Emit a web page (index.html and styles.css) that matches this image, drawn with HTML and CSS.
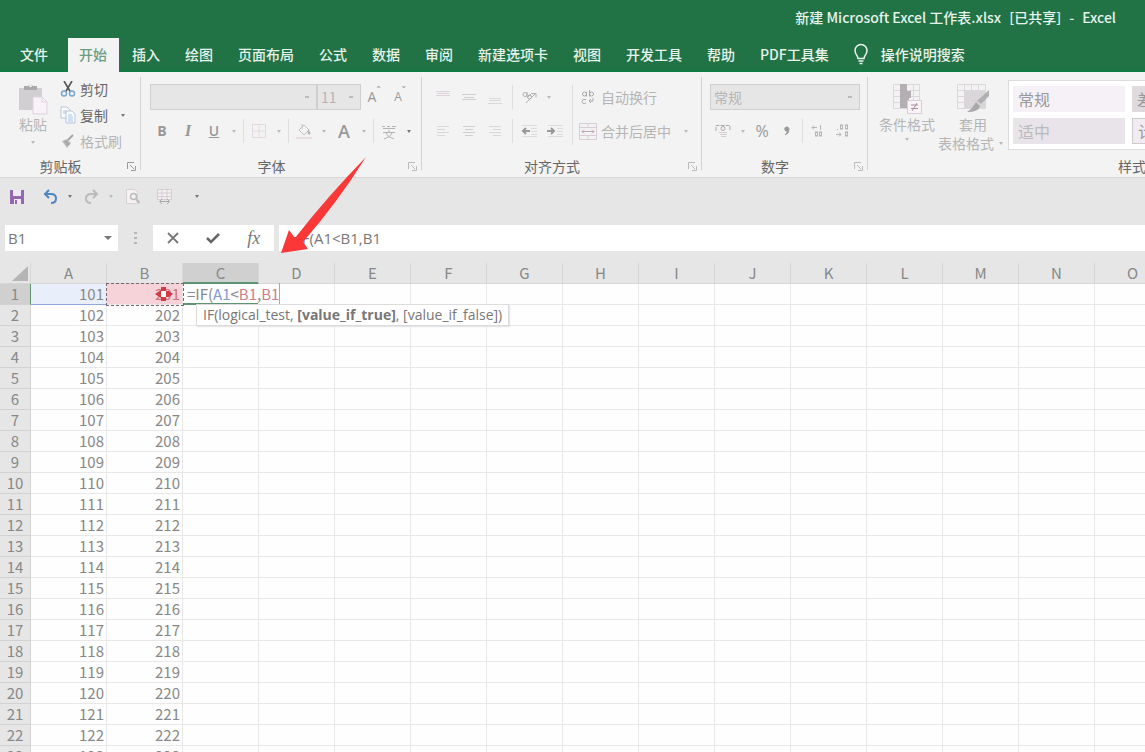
FILE: index.html
```html
<!DOCTYPE html>
<html lang="zh-CN">
<head>
<meta charset="utf-8">
<title>新建 Microsoft Excel 工作表.xlsx</title>
<link rel="stylesheet" href="styles.css">
</head>
<body>
<div class="app">
  <header class="top">
    <div class="title"><span>新建 Microsoft Excel 工作表.xlsx</span><span>[已共享]</span><span>-</span><span>Excel</span></div>
    <nav class="tabs">
      <button class="tab file">文件</button>
      <button class="tab active">开始</button>
      <button class="tab">插入</button>
      <button class="tab">绘图</button>
      <button class="tab">页面布局</button>
      <button class="tab">公式</button>
      <button class="tab">数据</button>
      <button class="tab">审阅</button>
      <button class="tab">新建选项卡</button>
      <button class="tab">视图</button>
      <button class="tab">开发工具</button>
      <button class="tab">帮助</button>
      <button class="tab">PDF工具集</button>
      <button class="tab tell"><svg width="16" height="22" viewBox="0 0 16 22" fill="none" stroke="#e8f3ec" stroke-width="1.5"><path d="M5 15.500C5 12.500 2 11.500 2 7.500a6 6 0 0 1 12 0c0 4-3 5-3 8z"/><path d="M5.500 18h5M6.500 20.500h3"/></svg>操作说明搜索</button>
    </nav>
  </header>

  <section class="ribbon">
    <div class="group clipboard">
      <div class="body">
        <button class="big paste dim">
          <svg width="30" height="32" viewBox="0 0 30 32"><path d="M1 5h23v22H1z" fill="#d2cfd3"/><path d="M6 7V3h4a3 3 0 0 1 5 0h4v4z" fill="#aaa"/><circle cx="12.500" cy="3" r="1.300" fill="#f3f3f3"/><path d="M15 14h9l5 5v12H15z" fill="#faf2f9" stroke="#ddd3dd"/><path d="M24 14v5h5" fill="none" stroke="#ddd3dd"/></svg>
          <span>粘贴</span><i class="caret"></i>
        </button>
        <div class="stack">
          <button class="line"><svg width="16" height="16" viewBox="0 0 16 16" fill="none"><path d="M4 0l6.500 11M12 0L5.500 11" stroke="#555" stroke-width="1.600"/><circle cx="4" cy="12.500" r="2.500" stroke="#7fa6cf" stroke-width="1.500"/><circle cx="12" cy="12.500" r="2.500" stroke="#7fa6cf" stroke-width="1.500"/></svg>剪切</button>
          <button class="line"><svg width="16" height="18" viewBox="0 0 16 18"><path d="M1 1h6l3 3v8H1z" fill="#f8fafc" stroke="#b9c5d3"/><path d="M6 5h6l3 3v9H6z" fill="#f8fafc" stroke="#b9c5d3"/><path d="M3 5h3M3 7h3M8 9h4M8 11h5M8 13h5M8 15h5" stroke="#a5c7e7"/></svg>复制<i class="caret dark"></i></button>
          <button class="line dim"><svg width="16" height="16" viewBox="0 0 16 16"><path d="M2 8l5-2 4 4-4 5z" fill="#b9b9b9"/><path d="M8 7l5-5M5 8l4 4" stroke="#a5a5a5" stroke-width="2"/></svg>格式刷</button>
        </div>
      </div>
      <div class="label"><span>剪贴板</span><button class="launch strong" aria-label="剪贴板选项"><svg width="9" height="9" viewBox="0 0 9 9"><path d="M.5 7V.5H7M3 3l4 4M8.500 4v4.500H4" fill="none" stroke="currentColor"/></svg></button></div>
    </div>

    <div class="group font">
      <div class="body rows">
        <div class="row">
          <select class="select face" aria-label="字体"><option></option></select><select class="select size" aria-label="字号"><option>11</option></select>
          <button class="tool grow" aria-label="增大字号">A<sup>ˆ</sup></button><button class="tool grow small" aria-label="减小字号">A<sup>ˇ</sup></button>
        </div>
        <div class="row">
          <button class="tool bold">B</button><button class="tool ital">I</button><button class="tool under">U</button><i class="caret"></i><i class="sep"></i>
          <button class="tool" aria-label="边框"><svg width="16" height="16" viewBox="0 0 16 16" fill="none" stroke="#e6d8e2"><path d="M1.500 1.500h13v13h-13zM8 1v14M1 8h14"/></svg></button><i class="caret"></i><i class="sep"></i>
          <button class="tool" aria-label="填充颜色"><svg width="16" height="17" viewBox="0 0 16 17"><path d="M3 7l5-5 5 5-5 5zM6 1v5" fill="none" stroke="#c6bec5"/><path d="M12 6q4 5 1.500 5.500T12 6" fill="#b5b0b5"/><path d="M0 14h16v2H0z" fill="#e5dce4"/></svg></button><i class="caret"></i>
          <button class="tool color">A</button><i class="caret"></i><i class="sep"></i>
          <button class="tool wen" aria-label="拼音指南"><svg width="14" height="17" viewBox="0 0 14 17" fill="none" stroke="#b4b4b4"><path d="M0 3.500h3M5 3.500h3M10 3.500h4M1 5.500h12M1 9.500h12M7 7v2M4 10q1 4 8 6M10 10q-1 4-8 6"/></svg></button><i class="caret dark"></i>
        </div>
      </div>
      <div class="label"><span>字体</span><button class="launch" aria-label="字体选项"><svg width="9" height="9" viewBox="0 0 9 9"><path d="M.5 7V.5H7M3 3l4 4M8.500 4v4.500H4" fill="none" stroke="currentColor"/></svg></button></div>
    </div>

    <div class="group align">
      <div class="body">
        <div class="rows">
          <div class="row">
            <button class="tool" aria-label="顶端对齐"><svg width="14" height="14" viewBox="0 0 14 14"><path d="M0 1.500h14M1 3.500h12M0 5.500h14" stroke="#dfd2da"/></svg></button><button class="tool" aria-label="垂直居中"><svg width="14" height="14" viewBox="0 0 14 14"><path d="M0 4.500h14M2 7.500h10M0 9.500h14" stroke="#d0d0d0"/></svg></button><button class="tool" aria-label="底端对齐"><svg width="14" height="14" viewBox="0 0 14 14"><path d="M1 8.500h12M1 10.500h12M0 13.500h14" stroke="#dcd7db"/></svg></button><i class="sep"></i>
            <button class="tool" aria-label="方向"><svg width="17" height="16" viewBox="0 0 17 16" fill="none" stroke="#b0b0b0"><path d="M5 14l9-9M11 4.500h4v4"/><circle cx="4" cy="5.500" r="2"/><path d="M6 3v5M7 8l4-4"/><circle cx="8.500" cy="8" r="2"/></svg></button><i class="caret"></i>
          </div>
          <div class="row">
            <button class="tool" aria-label="左对齐"><svg width="12" height="14" viewBox="0 0 12 14"><path d="M0 2.500h12M0 5.500h8M0 8.500h12M0 11.500h8" stroke="#d8d8d8"/></svg></button><button class="tool" aria-label="居中"><svg width="12" height="14" viewBox="0 0 12 14"><path d="M0 2.500h12M2 5.500h8M0 8.500h12M2 11.500h8" stroke="#d0d0d0"/></svg></button><button class="tool" aria-label="右对齐"><svg width="12" height="14" viewBox="0 0 12 14"><path d="M0 2.500h12M4 5.500h8M0 8.500h12M4 11.500h8" stroke="#d8d8d8"/></svg></button><i class="sep"></i>
            <button class="tool" aria-label="减少缩进"><svg width="17" height="14" viewBox="0 0 17 14" fill="none"><path d="M1 1.500h15M10 4.500h6M10 7.500h6M10 10.500h6M1 12.500h15" stroke="#dcdcdc"/><path d="M9 7H2M5 4L2 7l3 3" stroke="#999" stroke-width="2"/></svg></button><button class="tool" aria-label="增加缩进"><svg width="17" height="14" viewBox="0 0 17 14" fill="none"><path d="M1 1.500h15M10 4.500h6M10 7.500h6M10 10.500h6M1 12.500h15" stroke="#dcdcdc"/><path d="M0 7h7M4 4l3 3-3 3" stroke="#999" stroke-width="2"/></svg></button>
          </div>
        </div>
        <i class="sep tall"></i>
        <div class="rows">
          <button class="row wide"><svg width="18" height="16" viewBox="0 0 18 16" fill="none" stroke="#aaa"><circle cx="5.500" cy="5" r="2"/><path d="M7.500 3v4.500M10.500 1v6.500"/><circle cx="12.500" cy="5" r="2"/><path d="M7 10.500q-4-1-4 2t4 1.500M14 9v3h-4m2-2l-2 2 2 2"/></svg>自动换行</button>
          <button class="row wide"><svg width="18" height="17" viewBox="0 0 18 17" fill="none"><path d="M.5.500h17v16H.500zM0 4.500h18M0 12.500h18M9 0v4M9 13v4" stroke="#d9ccd6"/><path d="M3 8.500h12M5 6.500l-2 2 2 2M13 6.500l2 2-2 2" stroke="#bda8b8"/></svg>合并后居中<i class="caret"></i></button>
        </div>
      </div>
      <div class="label"><span>对齐方式</span><button class="launch" aria-label="对齐选项"><svg width="9" height="9" viewBox="0 0 9 9"><path d="M.5 7V.5H7M3 3l4 4M8.500 4v4.500H4" fill="none" stroke="currentColor"/></svg></button></div>
    </div>

    <div class="group number">
      <div class="body rows">
        <div class="row"><select class="select format" aria-label="数字格式"><option>常规</option></select></div>
        <div class="row">
          <button class="tool" aria-label="会计数字格式"><svg width="16" height="15" viewBox="0 0 16 15" fill="none"><path d="M1 7V1.500h14V7" stroke="#aaa" stroke-dasharray="4 1"/><circle cx="8" cy="4.500" r="2" stroke="#aaa"/><path d="M4 8.500h8M5 10.500h7M6 12.500h5" stroke="#d5ccd4"/></svg></button><i class="caret"></i>
          <button class="tool pct">%</button><button class="tool comma" aria-label="千位分隔"><svg width="6" height="10" viewBox="0 0 6 10"><path d="M3 1a2 2 0 0 0-.5 4q1 0 .8.600Q3 7.500 1 9q4-1.500 4-5.500Q5 1 3 1" fill="#999" stroke="#999"/></svg></button><i class="sep"></i>
          <button class="tool dec" aria-label="增加小数位数"><svg width="13" height="14" viewBox="0 0 13 14" fill="none" stroke="#b5b5b5"><path d="M1 3.500h5M3 1.500l-2 2 2 2M9.500 1v5"/><rect x="4.500" y="8" width="2" height="4"/><rect x="8.500" y="8" width="2" height="4"/></svg></button><button class="tool dec" aria-label="减少小数位数"><svg width="13" height="14" viewBox="0 0 13 14" fill="none" stroke="#b5b5b5"><path d="M0 10.500h5M3 8.500l2 2-2 2M1 5.500h1"/><rect x="4.500" y="1" width="2" height="4"/><rect x="9.500" y="1" width="2" height="4"/><rect x="9.500" y="8" width="2" height="4"/></svg></button>
        </div>
      </div>
      <div class="label"><span>数字</span><button class="launch" aria-label="数字选项"><svg width="9" height="9" viewBox="0 0 9 9"><path d="M.5 7V.5H7M3 3l4 4M8.500 4v4.500H4" fill="none" stroke="currentColor"/></svg></button></div>
    </div>

    <div class="group styles">
      <div class="body">
        <button class="big cond dim">
          <svg width="30" height="32" viewBox="0 0 30 32" fill="none"><path d="M1.500 2.500h26v24h-26zM1 8.500h27M1 14.500h27M1 20.500h27M21.500 2v25" stroke="#dfd6de"/><path d="M8 2h7v7h4v7h-2v10H8z" fill="#b3afb3"/><path d="M15.500 18.500h14v13h-14z" fill="#faf4f9" stroke="#d9ccd6"/><path d="M19 23h7M19 26.500h7M25 21l-5 8" stroke="#aa8ca0"/></svg>
          <span>条件格式</span><i class="caret"></i>
        </button>
        <button class="big tbl dim">
          <svg width="34" height="32" viewBox="0 0 34 32" fill="none"><path d="M8 8h21v19H8z" fill="#d8d6d9"/><path d="M1.500 2.500h28v24h-28zM1 8.500h28M1 14.500h28M1 20.500h28M8.500 2v25M15.500 2v25M22.500 2v25" stroke="#ded6dd"/><path d="M33 8v6l-8 8-4-3z" fill="#b0b0b0"/><path d="M20 20l4 4q-1 6-13 6 5-3 9-10" fill="#a9a9a9"/></svg>
          <span>套用</span><span class="two">表格格式<i class="caret"></i></span>
        </button>
        <div class="gallery">
          <button class="sw normal">常规</button><button class="sw bad">差</button>
          <button class="sw mid">适中</button><button class="sw calc">计算</button>
        </div>
      </div>
      <div class="label"><span>样式</span></div>
    </div>
  </section>

  <div class="quick">
    <button class="q" aria-label="保存"><svg width="14" height="14" viewBox="0 0 14 14"><path d="M0 0h14v14H0z" fill="#9468b0"/><path d="M3 0h8v6H3zM4 9h7v5H4z" fill="#efe8f3"/><path d="M5 10h2v4H5z" fill="#9468b0"/></svg></button>
    <button class="q" aria-label="撤消"><svg width="15" height="15" viewBox="0 0 15 15" fill="none" stroke="#4f86c0" stroke-width="2"><path d="M2 5h6q5 0 5 4.500T8 14"/><path d="M6 1L2 5l4 4"/></svg></button><i class="caret dark"></i>
    <button class="q" aria-label="恢复"><svg width="15" height="15" viewBox="0 0 15 15" fill="none" stroke="#bbb" stroke-width="2"><path d="M13 5H7q-5 0-5 4.500T7 14"/><path d="M9 1l4 4-4 4"/></svg></button><i class="caret"></i>
    <button class="q" aria-label="打印预览"><svg width="15" height="15" viewBox="0 0 15 15" fill="none"><path d="M1.500.5h8l3 3v11h-11z" fill="#f5f1f5" stroke="#d8d2d8"/><circle cx="8.500" cy="7.500" r="3" stroke="#bbb" stroke-width="1.500"/><path d="M11 10l3.500 4" stroke="#bbb" stroke-width="2"/></svg></button>
    <button class="q table" aria-label="列宽"><svg width="17" height="15" viewBox="0 0 17 15" fill="none"><path d="M1.500.5h14v10h-14z" fill="#f3eef2" stroke="#d5cdd4"/><path d="M1 4h15M1 7.500h15M6 0v11M11 0v11" stroke="#d5cdd4"/><path d="M4 12.500h9M6 10l-2.500 2.500L6 15M11 10l2.500 2.500L11 15" stroke="#aaa"/></svg></button>
    <i class="caret dark"></i>
  </div>

  <div class="fbar">
    <div class="namebox"><input aria-label="名称框" value="B1"><i class="caret dark down"></i></div>
    <svg class="grip" width="3" height="14" viewBox="0 0 3 14"><path d="M0 1h3v2H0zM0 6h3v2H0zM0 11h3v2H0z" fill="#b5b5b5"/></svg>
    <div class="actions">
      <button aria-label="取消"><svg width="12" height="12" viewBox="0 0 12 12"><path d="M1 1l10 10M11 1L1 11" stroke="#777" stroke-width="1.800"/></svg></button>
      <button aria-label="输入"><svg width="14" height="12" viewBox="0 0 14 12"><path d="M1 6l4 4 8-8" fill="none" stroke="#666" stroke-width="2.500"/></svg></button>
      <button class="fx">fx</button>
    </div>
    <input class="formula" aria-label="编辑栏" value="=IF(A1&lt;B1,B1">
  </div>

  <main class="sheet">
    <table class="grid" id="grid">
      <thead><tr id="cols"></tr></thead>
      <tbody id="rows"></tbody>
    </table>
    <div class="tip">IF(logical_test, <b>[value_if_true]</b>, [value_if_false])</div>
    <svg class="cursor" width="20" height="14" viewBox="0 0 20 14"><path d="M7 0h5v4h3l4 3-4 3h-3v4H7v-3L1 7l6-4z" fill="#cf3a44"/><path d="M7 4h5v6H7z" fill="#fff"/></svg>
  </main>

  <svg class="arrow" width="86" height="97" viewBox="0 0 86 97"><path d="M0 96l8-23 6 8Q46 40 85 0 56 46 22 85l5 7z" fill="#fb3737"/></svg>
</div>
<script src="script.js"></script>
</body>
</html>
```
FILE: styles.css
```css
* { box-sizing: border-box; }
body {
  margin: 0;
  font: 14px/20px "Open Sans", "Noto Sans CJK SC", sans-serif;
  color: #666;
  background: #e6e6e7;
}
button, input, select {
  font: inherit;
  color: inherit;
  border: 0;
  padding: 0;
  margin: 0;
  background: none;
  border-radius: 0;
}
svg { display: block; flex: none; }
.app {
  position: relative;
  height: 100vh;
  display: flex;
  flex-direction: column;
  overflow: hidden;
}
.top { flex: none; background: #217346; color: #e6f2ea; border-bottom: 2px solid #0f7a43; }
.title {
  height: 38px;
  padding: 0 29px 4px 0;
  display: flex;
  justify-content: flex-end;
  align-items: center;
  gap: 8px;
  font-family: "Noto Sans CJK SC", sans-serif;
  font-weight: 500;
}
.tabs { display: flex; height: 32px; font-family: "Noto Sans CJK SC", sans-serif; font-weight: 500; }
.tab { flex: none; padding: 0 12px 0 13px; white-space: nowrap; }
.tab.file { padding: 0 20px; }
.tab.active { background: #f3f3f3; color: #6b9c80; margin-bottom: -2px; padding: 0 12px 2px 11px; }
.tab.tell { display: flex; align-items: center; gap: 12px; padding-left: 12px; }

.caret {
  flex: none;
  width: 14px;
  display: flex;
  justify-content: center;
  color: #bbb;
}
.caret::before {
  content: "";
  border: 2px solid transparent;
  border-top: 3px solid currentColor;
  border-bottom: 0;
}
.caret.dark { color: #777; }
.caret.down::before { border-width: 4px 4px 0; }

.ribbon {
  flex: none;
  display: flex;
  height: 106px;
  overflow: hidden;
  background: #f3f3f3;
  border-bottom: 1px solid #d8d8d8;
  font-family: "Noto Sans CJK SC", sans-serif;
}
.group {
  flex: none;
  position: relative;
  display: flex;
  flex-direction: column;
  padding: 4px 0 0 8px;
}
.group::after {
  content: "";
  position: absolute;
  right: 0;
  top: 5px;
  bottom: 7px;
  width: 1px;
  background: #d2d2d2;
}
.clipboard { width: 141px; }
.font { width: 281px; }
.align { width: 280px; }
.number { width: 166px; }
.styles { width: 528px; }
.body { display: flex; height: 80px; }
.rows { display: flex; flex-direction: column; gap: 8px; padding-top: 8px; }
.row { display: flex; height: 26px; align-items: center; }
.label { position: relative; height: 22px; padding-right: 28px; text-align: center; line-height: 22px; color: #666; }
.launch { position: absolute; right: 5px; top: 7px; color: #bbb; }
.launch.strong { color: #999; }
.styles .label { padding-right: 8px; }
.dim { color: #b5b5b5; }
.big { display: flex; flex-direction: column; align-items: center; line-height: 18px; padding-top: 6px; }
.big .caret { margin-top: 8px; }
.paste { width: 50px; padding-top: 7px; }
.stack { display: flex; flex-direction: column; }
.line { display: flex; align-items: center; gap: 4px; height: 26px; margin-left: 2px; }
.line .caret { margin-left: 4px; }
.select {
  appearance: none;
  height: 26px;
  border: 1px solid #cfcfcf;
  background: #e6e6e7 linear-gradient(#bbb, #bbb) no-repeat right 7px center / 4px 2px;
  color: #b5b5b5;
  padding-left: 3px;
}
.face { width: 167px; margin-left: 1px; }
.size { width: 44px; }
.format { width: 150px; }
.tool {
  flex: none;
  width: 26px;
  height: 26px;
  display: flex;
  align-items: center;
  justify-content: center;
  color: #999;
  font-family: "Open Sans", sans-serif;
}
.tool sup { font-size: 10px; line-height: 14px; align-self: flex-start; }
.small { font-size: 12px; }
.bold { font-weight: bold; }
.ital { font-style: italic; font-weight: bold; font-family: "Liberation Serif", serif; font-size: 17px; }
.under { text-decoration: underline; font-weight: 600; }
.color { font-size: 18px; font-weight: 600; }
.sep { flex: none; width: 1px; height: 24px; margin: 0 2px; background: #dedede; }
.align .sep { margin: 0 3px 0 4px; }
.align .tall { height: 60px; margin-top: 9px; }
.wide { gap: 4px; color: #b5b5b5; padding-left: 3px; }
.wide .caret { margin-left: 4px; }
.tool.pct { width: 24px; font-size: 16px; }
.tool.dec { width: 25px; }
.cond { width: 62px; gap: 1px; }
.tbl { width: 70px; gap: 1px; }
.two { display: flex; align-items: center; }
.two .caret { margin: 0; }
.cond .caret { margin-top: 4px; }
.gallery {
  flex: none;
  width: 380px;
  height: 70px;
  margin-top: 4px;
  display: grid;
  grid-template-columns: 112px 112px;
  grid-template-rows: 26px 26px;
  gap: 6px 7px;
  padding: 5px 4px;
  background: #fff;
  border: 1px solid #dcdcdc;
}
.sw { text-align: left; padding-left: 5px; font-size: 16px; background: #f6f1f7; color: #999; }
.sw.mid { background: #e9e4ea; color: #bbb; }
.sw.bad { background: #dedade; }
.sw.calc { background: #f1ecf1; border: 1px solid #ccc; }

.quick { flex: none; display: flex; align-items: center; height: 37px; padding-left: 4px; }
.q { width: 26px; display: flex; justify-content: center; }
.q + .q { margin-left: 7px; }
.quick .caret:last-child { margin-left: 14px; }
.quick .q + .caret { margin-right: 1px; }
.q.table { width: 24px; }

.fbar {
  flex: none;
  display: flex;
  align-items: center;
  height: 48px;
  padding: 10px 0 12px 5px;
  font-size: 15px;
  color: #777;
}
.namebox { display: flex; align-items: center; width: 113px; height: 26px; background: #fff; padding: 0 3px; }
.namebox input { flex: 1; min-width: 0; }
.grip { margin: 0 16px; }
.actions { display: flex; align-items: center; width: 121px; height: 26px; background: #fff; }
.actions button { flex: 1; display: flex; justify-content: center; }
.actions .fx { font: italic 18px/20px "Liberation Serif", serif; }
.formula { flex: 1; min-width: 0; height: 26px; margin-left: 5px; padding-left: 10px; background: #fff; }

.sheet { position: relative; flex: 1; min-height: 0; overflow: hidden; background: #e6e6e7; }
.grid {
  table-layout: fixed;
  border-collapse: separate;
  border-spacing: 0;
  font: 15px/20px "Noto Sans CJK SC", sans-serif;
  color: #888;
}
.grid th, .grid td { height: 21px; padding: 0; white-space: nowrap; font-weight: normal; border-right: 1px solid #e8e8e8; border-bottom: 1px solid #e8e8e8; }
.grid td { background: #fefefe; text-align: right; padding-right: 2px; }
.grid thead th { width: 76px; border-color: #d6d6d6; }
.grid thead .corner { width: 31px; }
.corner svg { margin-left: 12px; }
.grid tbody th { background: #e6e6e7; border-color: #d2d2d2; }
.grid th.on { background: #d0d0d0; }
.grid thead th.on { border-bottom-color: #5f9472; box-shadow: inset 0 -1px #5f9472; }
.grid tbody th.on { border-right-color: #5f9472; }
.grid td.ref-a { background: #e8effb; border-bottom-color: #8fa6dc; }
.grid td.ref-b { background: #f5d3d9; outline: 1px dashed #7c686c; color: #d4717d; }
.grid td.edit { text-align: left; padding-left: 4px; border-bottom-color: #5f9472; border-right-color: transparent; box-shadow: inset 0 -1px #5f9472; }
.blue { color: #8099d2; }
.red { color: #cf7f89; }
.caretline { border-right: 1px solid #c99; }
.tip {
  position: absolute;
  left: 196px;
  top: 41px;
  height: 22px;
  padding: 0 6px;
  line-height: 19px;
  background: #fff;
  border: 1px solid #dcdcdc;
  box-shadow: 1px 1px 1px #e5e5e5;
  color: #777;
  font-size: 14px;
  white-space: nowrap;
}
.cursor { position: absolute; left: 154px; top: 24px; }
.arrow { position: absolute; left: 281px; top: 157px; pointer-events: none; }
```
FILE: script.js
```js
const HEAD_WIDTH = 31;
const COL_WIDTH = 76;
const ROW_HEIGHT = 21;

const grid = document.getElementById("grid");
const cols = document.getElementById("cols");
const rows = document.getElementById("rows");

function cell(tag, text, className) {
  const el = document.createElement(tag);
  el.textContent = text;
  if (className) el.className = className;
  return el;
}

function columnName(i) {
  return (i >= 26 ? String.fromCharCode(64 + Math.floor(i / 26)) : "") + String.fromCharCode(65 + (i % 26));
}

function render() {
  const colCount = Math.ceil((window.innerWidth - HEAD_WIDTH) / COL_WIDTH);
  const rowCount = Math.ceil((grid.parentElement.clientHeight - ROW_HEIGHT) / ROW_HEIGHT);
  grid.style.width = HEAD_WIDTH + colCount * COL_WIDTH + "px";

  const corner = cell("th", "", "corner");
  corner.innerHTML = '<svg width="17" height="15" viewBox="0 0 17 15"><path d="M16 0v15H0z" fill="#b5b5b5"/></svg>';
  cols.replaceChildren(corner);
  for (let c = 0; c < colCount; c++) {
    cols.append(cell("th", columnName(c), c === 2 ? "on" : ""));
  }

  rows.replaceChildren();
  for (let r = 1; r <= rowCount; r++) {
    const tr = document.createElement("tr");
    tr.append(cell("th", r, r === 1 ? "on" : ""));
    for (let c = 0; c < colCount; c++) {
      const value = c < 2 ? (c + 1) * 100 + r : "";
      const mark = r === 1 ? ["ref-a", "ref-b", "edit"][c] : "";
      const td = cell("td", value, mark);
      if (mark === "edit") {
        td.innerHTML = '=IF(<span class="blue">A1</span>&lt;<span class="red">B1</span>,<span class="red caretline">B1</span>';
      }
      tr.append(td);
    }
    rows.append(tr);
  }
}

render();
window.addEventListener("resize", render);
```
